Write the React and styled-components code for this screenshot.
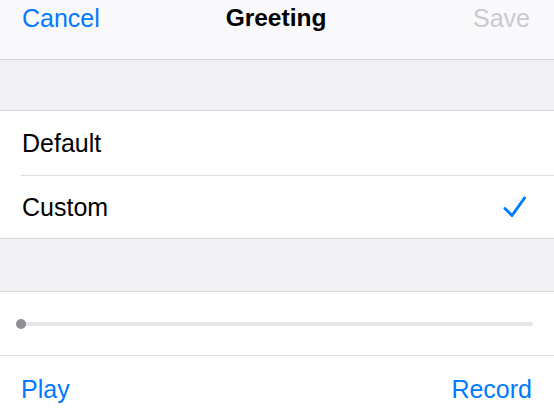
import React from "react";
import styled, { createGlobalStyle } from "styled-components";

const Global = createGlobalStyle`
  html, body { margin: 0; padding: 0; background: #ffffff; overflow: hidden; }
  body { font-family: "Liberation Sans", Arial, sans-serif; -webkit-font-smoothing: antialiased; }
`;

const Screen = styled.div`
  width: 554px;
  height: 412px;
  display: flex;
  flex-direction: column;
  background: #ffffff;
`;

const NavBar = styled.div`
  height: 60px;
  flex: none;
  box-sizing: border-box;
  background: #f9f9fb;
  border-bottom: 1px solid #d4d4d8;
  display: grid;
  grid-template-columns: 1fr auto 1fr;
  align-items: start;
  padding: 2px 24px 0 22px;
`;

const NavButton = styled.span`
  font-size: 25px;
  line-height: 32px;
  color: ${(p) => (p.$disabled ? "#c9c9ce" : "#007aff")};
  justify-self: ${(p) => (p.$right ? "end" : "start")};
`;

const Title = styled.span`
  font-size: 24.5px;
  line-height: 32px;
  font-weight: 700;
  color: #000;
`;

const GroupGap = styled.div`
  height: ${(p) => p.$h}px;
  flex: none;
  background: #f0f0f5;
  border-bottom: 1px solid #d8d8dc;
`;

const Row = styled.div`
  height: ${(p) => p.$h}px;
  flex: none;
  display: flex;
  align-items: center;
  justify-content: space-between;
  padding: 0 27px 0 22px;
  box-sizing: border-box;
  border-bottom: ${(p) => (p.$last ? "1px solid #d8d8dc" : "none")};
`;

const Separator = styled.div`
  height: 1px;
  flex: none;
  margin-left: 21px;
  background: #dcdce0;
`;

const Label = styled.span`
  font-size: 25px;
  color: #000;
`;

const SliderRow = styled.div`
  height: 64px;
  flex: none;
  display: flex;
  align-items: center;
  padding: 0 21px 0 16px;
  border-bottom: 1px solid #d8d8dc;
  box-sizing: border-box;
`;

const Track = styled.div`
  flex: 1;
  height: 4px;
  border-radius: 2px;
  background: #e5e5ea;
  position: relative;
  margin-top: 1px;
`;

const Thumb = styled.div`
  position: absolute;
  left: 0;
  top: 50%;
  width: 10px;
  height: 10px;
  margin-top: -5px;
  border-radius: 50%;
  background: #8e8e93;
`;

const Toolbar = styled.div`
  flex: 1;
  display: flex;
  justify-content: space-between;
  align-items: flex-start;
  padding: 17px 22px 0 21px;
`;

const ToolButton = styled.span`
  font-size: 25px;
  line-height: 32px;
  color: #007aff;
`;

const Check = () => (
  <svg width="24" height="23" viewBox="0 0 24 23" fill="none">
    <path
      d="M2 12.5 L9 19.5 L21.5 2"
      stroke="#007aff"
      strokeWidth="3"
      strokeLinecap="round"
      strokeLinejoin="round"
    />
  </svg>
);

export default function App() {
  return (
    <>
      <Global />
      <Screen>
        <NavBar>
          <NavButton>Cancel</NavButton>
          <Title>Greeting</Title>
          <NavButton $right $disabled>Save</NavButton>
        </NavBar>
        <GroupGap $h={50} />
        <Row $h={64}>
          <Label>Default</Label>
        </Row>
        <Separator />
        <Row $h={63} $last>
          <Label>Custom</Label>
          <Check />
        </Row>
        <GroupGap $h={52} />
        <SliderRow>
          <Track>
            <Thumb />
          </Track>
        </SliderRow>
        <Toolbar>
          <ToolButton>Play</ToolButton>
          <ToolButton>Record</ToolButton>
        </Toolbar>
      </Screen>
    </>
  );
}
